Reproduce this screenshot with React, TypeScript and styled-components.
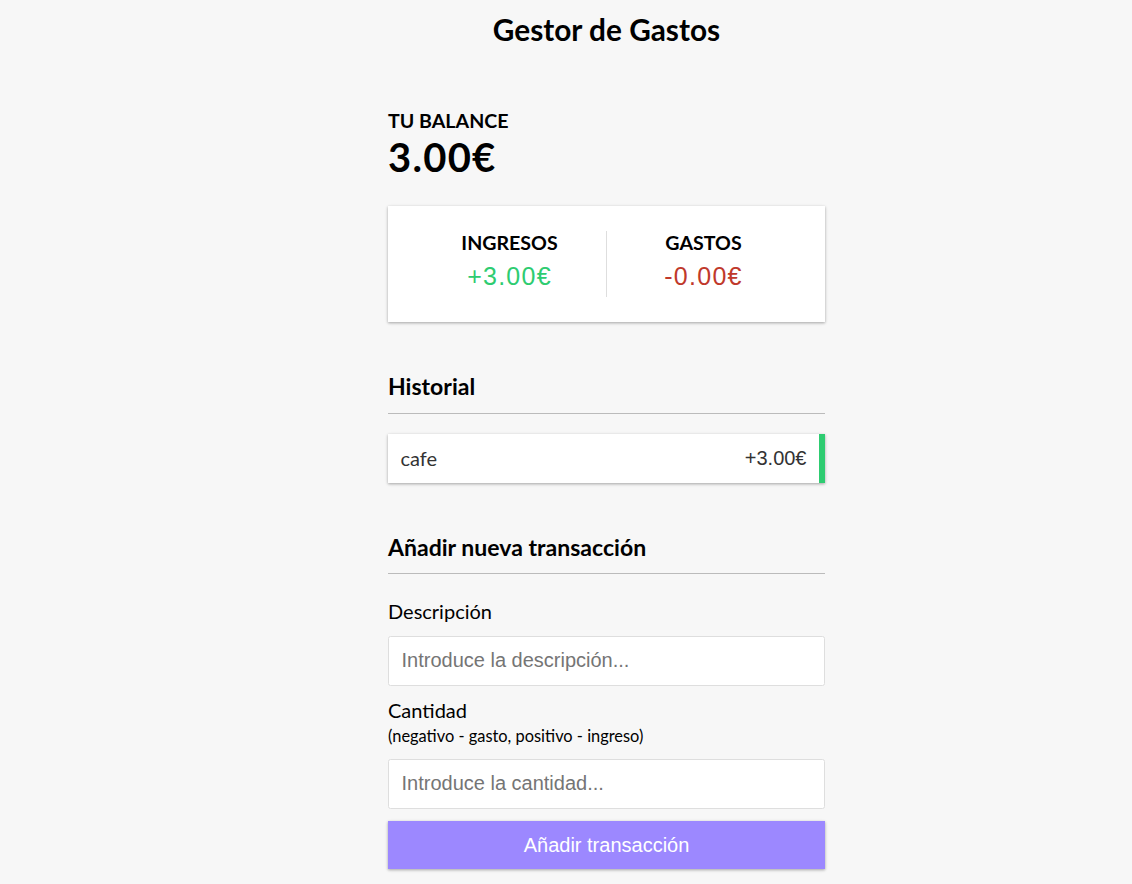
import React from "react";
import styled, { createGlobalStyle } from "styled-components";

const shadow = "0 1.25px 3.75px rgba(0,0,0,0.12), 0 1.25px 2.5px rgba(0,0,0,0.24)";

const Global = createGlobalStyle`
  * { box-sizing: border-box; }
  body {
    margin: 0;
    background-color: #f7f7f7;
    font-family: Lato, "Noto Sans", sans-serif;
    color: #000;
  }
`;

const Page = styled.div`
  display: flex;
  flex-direction: column;
  width: 437px;
  margin-left: 388px;
`;

const Title = styled.h2`
  font-size: 29.8px;
  font-weight: 700;
  line-height: 36px;
  margin: 12px 0 0;
  text-align: center;
`;

const Container = styled.div`
  margin-top: 60.9px;
`;

const SmallHeading = styled.h4`
  font-size: 19.6px;
  line-height: 24px;
  font-weight: 700;
  margin: 0;
  text-transform: uppercase;
`;

const Balance = styled.h1`
  font-size: 40px;
  line-height: 48px;
  font-weight: 700;
  letter-spacing: 1.25px;
  margin: 0;
`;

const IncExp = styled.div`
  background-color: #fff;
  box-shadow: ${shadow};
  padding: 25px;
  display: flex;
  justify-content: space-between;
  margin: 25px 0;
`;

const IncExpCol = styled.div<{ $divider?: boolean }>`
  flex: 1;
  text-align: center;
  border-right: ${(p) => (p.$divider ? "1px solid #dedede" : "none")};
`;

const Money = styled.p<{ $kind: "plus" | "minus" }>`
  font-family: "Liberation Sans", Arial, sans-serif;
  font-size: 25px;
  line-height: 30px;
  letter-spacing: 1.25px;
  margin: 6.25px 0;
  color: ${(p) => (p.$kind === "plus" ? "#2ecc71" : "#c0392b")};
`;

const SectionHeading = styled.h3`
  font-size: 23.05px;
  line-height: 28px;
  font-weight: 700;
  border-bottom: 1px solid #bbb;
  padding-bottom: 12.5px;
  margin: 50px 0 12.5px;
`;

const List = styled.ul`
  list-style-type: none;
  padding: 0;
  margin: 20px 0 50px;
`;

const Item = styled.li<{ $kind: "plus" | "minus" }>`
  background-color: #fff;
  box-shadow: ${shadow};
  color: #333;
  display: flex;
  justify-content: space-between;
  padding: 12.5px;
  margin: 12.5px 0;
  font-size: 20px;
  line-height: 24px;
  border-right: 6.25px solid ${(p) => (p.$kind === "plus" ? "#2ecc71" : "#c0392b")};
`;

const Amount = styled.span`
  font-family: "Liberation Sans", Arial, sans-serif;
`;

const FormControl = styled.div`
  display: flex;
  flex-direction: column;
  align-items: flex-start;
`;

const Label = styled.label`
  display: inline-block;
  margin: 12.5px 0;
  font-size: 20px;
  line-height: 24px;
`;

const Hint = styled.small`
  font-size: 16.4px;
  line-height: 1;
`;

const Input = styled.input`
  border: 1px solid #dedede;
  border-radius: 2.5px;
  display: block;
  font-family: "Liberation Sans", Arial, sans-serif;
  font-size: 20px;
  line-height: 23px;
  padding: 12.5px;
  width: 100%;
  background: #fff;
  color: #000;
  outline: none;
  &::placeholder { color: #757575; }
`;

const Button = styled.button`
  cursor: pointer;
  background-color: #9c88ff;
  box-shadow: ${shadow};
  color: #fff;
  border: 0;
  display: block;
  font-family: "Liberation Sans", Arial, sans-serif;
  font-size: 20px;
  line-height: 23px;
  margin: 12.5px 0 37.5px;
  padding: 12.5px;
  width: 100%;
`;

export default function App() {
  return (
    <>
      <Global />
      <Page>
        <Title>Gestor de Gastos</Title>
        <Container>
          <SmallHeading>Tu Balance</SmallHeading>
          <Balance>3.00€</Balance>
          <IncExp>
            <IncExpCol $divider>
              <SmallHeading>Ingresos</SmallHeading>
              <Money $kind="plus">+3.00€</Money>
            </IncExpCol>
            <IncExpCol>
              <SmallHeading>Gastos</SmallHeading>
              <Money $kind="minus">-0.00€</Money>
            </IncExpCol>
          </IncExp>
          <SectionHeading>Historial</SectionHeading>
          <List>
            <Item $kind="plus">
              cafe <Amount>+3.00€</Amount>
            </Item>
          </List>
          <SectionHeading>Añadir nueva transacción</SectionHeading>
          <form onSubmit={(e) => e.preventDefault()}>
            <FormControl>
              <Label htmlFor="text">Descripción</Label>
              <Input id="text" type="text" placeholder="Introduce la descripción..." />
            </FormControl>
            <FormControl>
              <Label htmlFor="amount">
                Cantidad <br />
                <Hint>(negativo - gasto, positivo - ingreso)</Hint>
              </Label>
              <Input id="amount" type="number" placeholder="Introduce la cantidad..." />
            </FormControl>
            <Button type="submit">Añadir transacción</Button>
          </form>
        </Container>
      </Page>
    </>
  );
}
